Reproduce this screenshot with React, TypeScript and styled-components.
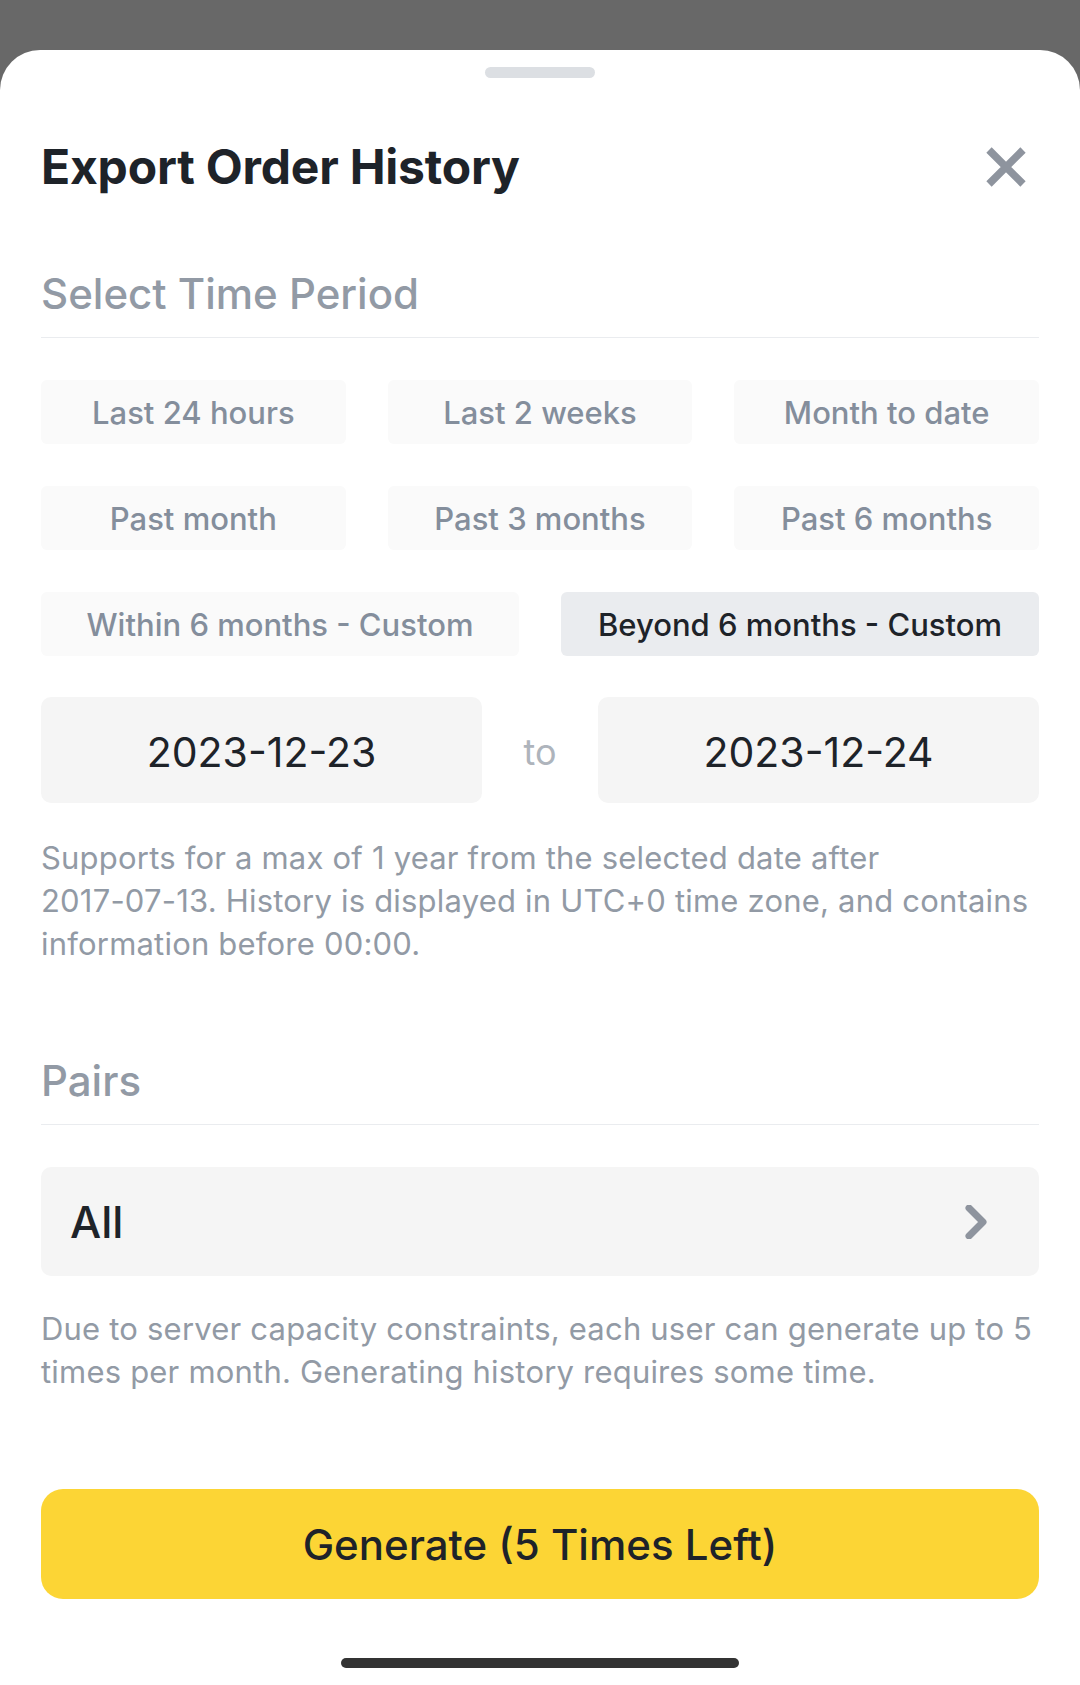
import React from "react";
import styled, { createGlobalStyle } from "styled-components";

const Global = createGlobalStyle`
  html, body { margin: 0; padding: 0; background: #686868; }
  body { font-family: Inter, "Noto Sans", sans-serif; -webkit-font-smoothing: antialiased; }
  * { box-sizing: border-box; }
`;

const Sheet = styled.div`
  margin-top: 50px;
  min-height: 1635px;
  background: #ffffff;
  border-radius: 40px 40px 0 0;
  padding: 17px 41px 0;
  display: flex;
  flex-direction: column;
`;

const Handle = styled.div`
  width: 110px;
  height: 11px;
  border-radius: 6px;
  background: #dcdfe3;
  align-self: center;
`;

const Header = styled.div`
  margin-top: 60px;
  display: flex;
  align-items: center;
  justify-content: space-between;
`;

const Title = styled.h1`
  margin: 0;
  font-size: 48px;
  line-height: 58px;
  font-weight: 700;
  color: #1e2329;
  letter-spacing: -0.2px;
`;

const CloseBtn = styled.button`
  border: 0;
  background: transparent;
  padding: 0;
  margin-right: 12px;
  width: 42px;
  height: 42px;
  display: flex;
`;

const SectionTitle = styled.div<{ $top: number }>`
  margin-top: ${(p) => p.$top}px;
  padding-bottom: 17px;
  border-bottom: 1.5px solid #eaecef;
  font-size: 42px;
  line-height: 53px;
  font-weight: 500;
  color: #929aa5;
`;

const ChipGrid = styled.div<{ $cols: number }>`
  margin-top: 42px;
  display: grid;
  grid-template-columns: repeat(${(p) => p.$cols}, 1fr);
  column-gap: 42px;
`;

const ChipStack = styled.div`
  display: flex;
  flex-direction: column;
`;

const Chip = styled.div<{ $active?: boolean }>`
  height: 64px;
  border-radius: 6px;
  background: ${(p) => (p.$active ? "#eaecef" : "#fafafa")};
  color: ${(p) => (p.$active ? "#1e2329" : "#848e9c")};
  font-size: 31px;
  font-weight: 500;
  display: flex;
  align-items: center;
  justify-content: center;
  white-space: nowrap;
`;

const DateRow = styled.div`
  margin-top: 41px;
  display: grid;
  grid-template-columns: 441px 1fr 441px;
  align-items: center;
`;

const DateBox = styled.div`
  height: 106px;
  border-radius: 10px;
  background: #f5f5f5;
  color: #1e2329;
  font-size: 41px;
  padding-top: 4px;
  display: flex;
  align-items: center;
  justify-content: center;
`;

const To = styled.div`
  text-align: center;
  font-size: 36px;
  padding-top: 4px;
  color: #aeb4bc;
`;

const Helper = styled.p<{ $top: number }>`
  margin: ${(p) => p.$top}px 0 0;
  font-size: 31px;
  line-height: 43px;
  letter-spacing: 0.2px;
  color: #929aa5;
`;

const SelectBox = styled.div`
  margin-top: 42px;
  height: 109px;
  border-radius: 10px;
  background: #f5f5f5;
  display: flex;
  align-items: center;
  justify-content: space-between;
  padding: 0 50px 0 29px;
  font-size: 44px;
  font-weight: 500;
  color: #1e2329;
`;

const Generate = styled.button`
  margin-top: 96px;
  height: 110px;
  width: 100%;
  border: 0;
  border-radius: 22px;
  background: #fcd535;
  color: #1e2329;
  font-family: Inter, "Noto Sans", sans-serif;
  font-size: 42px;
  font-weight: 500;
`;

const HomeBar = styled.div`
  margin-top: 59px;
  width: 398px;
  height: 10px;
  border-radius: 5px;
  background: #333333;
  align-self: center;
`;

const rows1 = ["Last 24 hours", "Last 2 weeks", "Month to date"];
const rows2 = ["Past month", "Past 3 months", "Past 6 months"];

const WJ = "\u2060";

export default function App() {
  return (
    <>
      <Global />
      <Sheet>
        <Handle />
        <Header>
          <Title>Export Order History</Title>
          <CloseBtn aria-label="close">
            <svg width="42" height="42" viewBox="0 0 42 42">
              <path d="M4 4 L38 38 M38 4 L4 38" stroke="#8e949e" strokeWidth="7.5" strokeLinecap="butt" />
            </svg>
          </CloseBtn>
        </Header>
        <SectionTitle $top={71}>Select Time Period</SectionTitle>
        <ChipStack>
          <ChipGrid $cols={3}>
            {rows1.map((t) => (
              <Chip key={t}>{t}</Chip>
            ))}
          </ChipGrid>
          <ChipGrid $cols={3}>
            {rows2.map((t) => (
              <Chip key={t}>{t}</Chip>
            ))}
          </ChipGrid>
          <ChipGrid $cols={2}>
            <Chip>Within 6 months - Custom</Chip>
            <Chip $active>Beyond 6 months - Custom</Chip>
          </ChipGrid>
        </ChipStack>
        <DateRow>
          <DateBox>2023-12-23</DateBox>
          <To>to</To>
          <DateBox>2023-12-24</DateBox>
        </DateRow>
        <Helper $top={33}>
          {`Supports for a max of 1 year from the selected date after 2017-${WJ}07-${WJ}13. History is displayed in UTC+0 time zone, and contains information before 00:00.`}
        </Helper>
        <SectionTitle $top={89}>Pairs</SectionTitle>
        <SelectBox>
          <span>All</span>
          <svg width="24" height="34" viewBox="0 0 24 34">
            <path d="M4 3 L18 17 L4 31" fill="none" stroke="#8e949e" strokeWidth="7" strokeLinejoin="round" strokeLinecap="round" />
          </svg>
        </SelectBox>
        <Helper $top={31}>
          Due to server capacity constraints, each user can generate up to 5 times per month. Generating history requires some time.
        </Helper>
        <Generate>Generate (5 Times Left)</Generate>
        <HomeBar />
      </Sheet>
    </>
  );
}
